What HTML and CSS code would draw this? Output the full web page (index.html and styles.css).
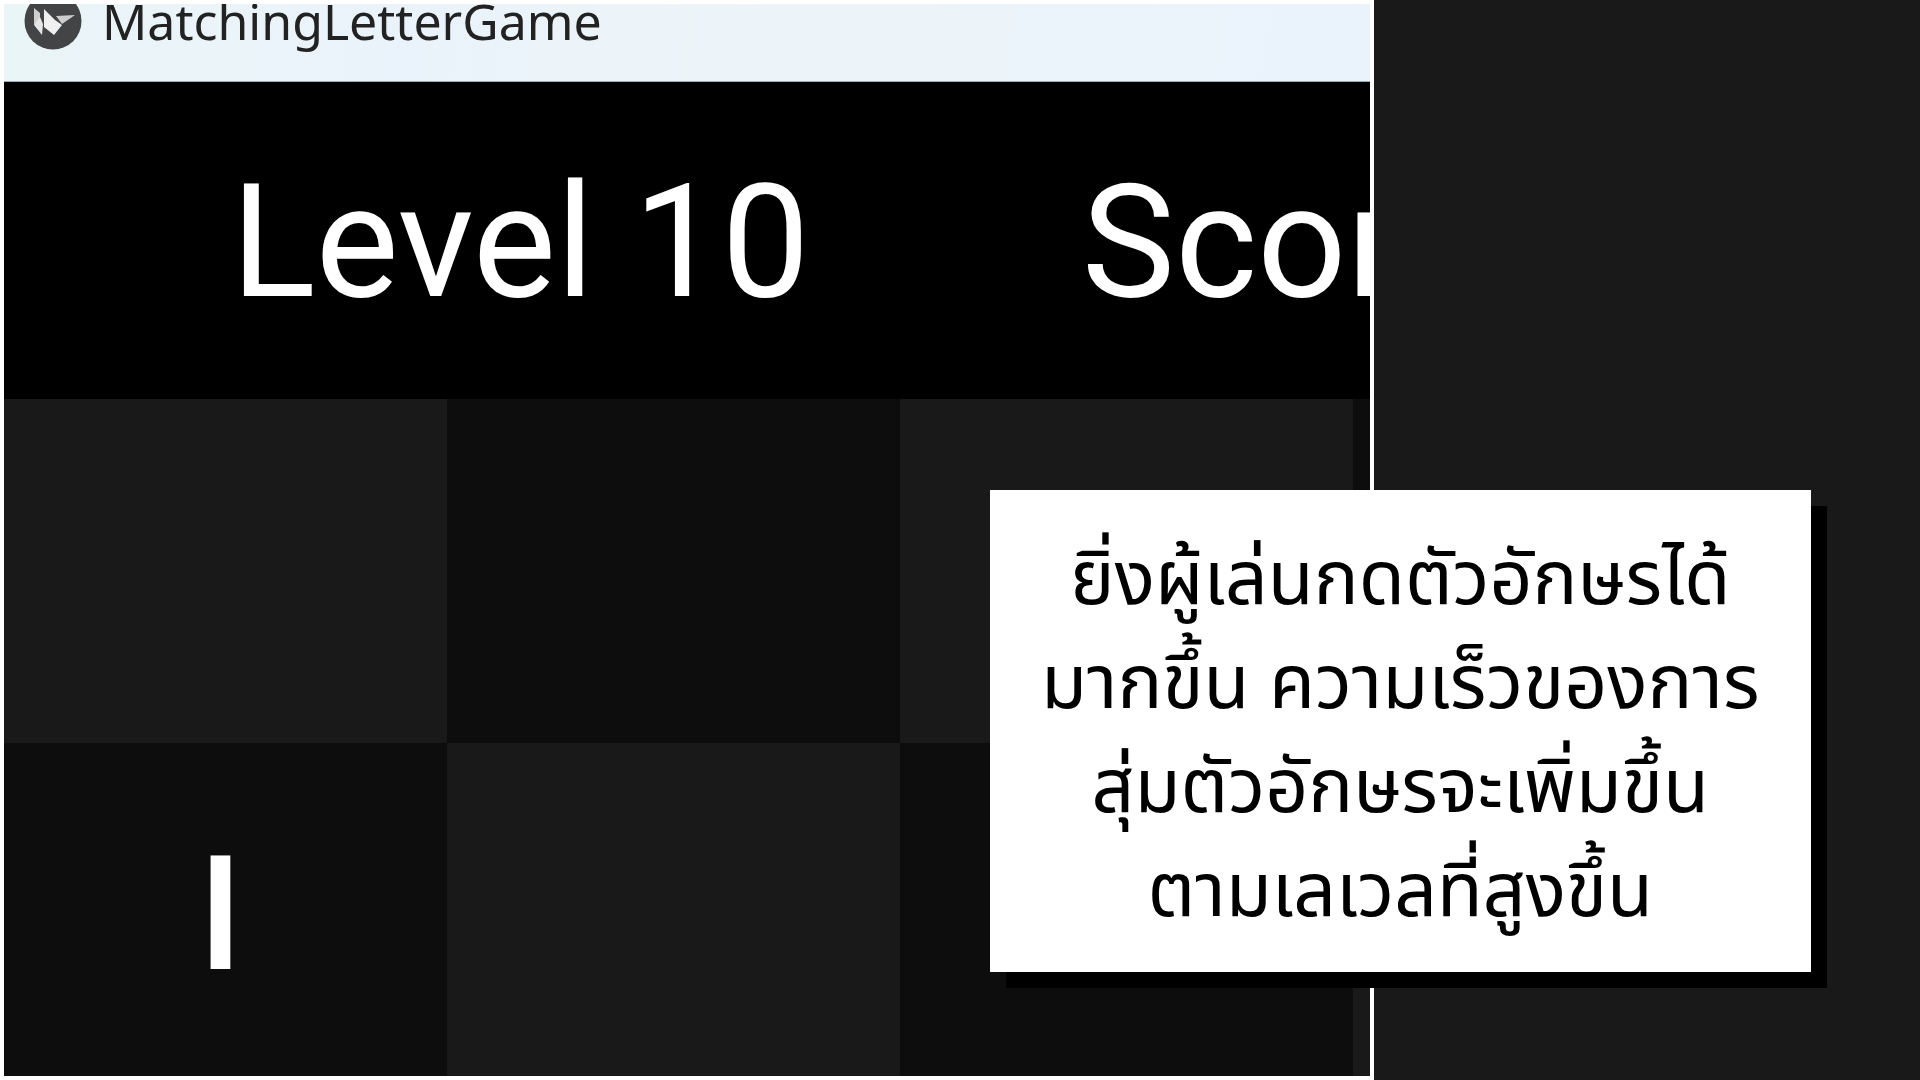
FILE: index.html
```html
<!DOCTYPE html>
<html lang="th">
<head>
<meta charset="utf-8">
<title>MatchingLetterGame</title>
<link rel="stylesheet" href="styles.css">
</head>
<body>
<main class="slide">
  <section class="window">
    <header class="titlebar">
      <svg class="logo" viewBox="0 0 58 58" aria-hidden="true">
        <circle cx="29" cy="29" r="28.5" fill="#434446"/>
        <path d="M10 16l6 5v7l-6 5z" fill="#cfcfcf"/>
        <path d="M16 25l-6 8 8 10 1-11z" fill="#e6e6e6"/>
        <path d="M20 17l11 11 7 5-8 10-10-8z" fill="#f0f0f0"/>
        <path d="M32 24l19-1-13 9z" fill="#cdcdcd"/>
      </svg>
      <h1 class="title">MatchingLetterGame</h1>
    </header>
    <div class="status">
      <span class="level">Level 10</span>
      <span class="score">Score</span>
    </div>
    <div class="board">
      <div class="cell light"></div><div class="cell"></div><div class="cell light"></div><div class="cell"></div>
      <div class="cell">I</div><div class="cell light"></div><div class="cell"></div><div class="cell light"></div>
    </div>
  </section>
  <p class="caption">ยิ่งผู้เล่นกดตัวอักษรได้<br>มากขึ้น ความเร็วของการ<br>สุ่มตัวอักษรจะเพิ่มขึ้น<br>ตามเลเวลที่สูงขึ้น</p>
</main>
</body>
</html>
```
FILE: styles.css
```css
* { box-sizing: border-box; }
body { margin: 0; background: #191919; }
.slide { position: relative; height: 100vh; display: flex; overflow: hidden; }
.window { width: 71.55%; display: flex; flex-direction: column; overflow: hidden; border: 4px solid #fff; background: #000; }
.titlebar { flex: none; height: 78px; display: flex; align-items: center; gap: 20px; padding: 0 20px 43px; background: linear-gradient(100deg, #eaf5f7, #eaf3fb 30%, #ecf4f8 50%, #eaf3fc); border-bottom: 1px solid #9db0ae; }
.logo { width: 58px; height: 58px; flex: none; }
.title { margin: 0; font: 400 50px/60px "Noto Sans", sans-serif; color: #222; }
.status { flex: none; height: 317px; display: flex; align-items: center; gap: 272px; padding: 3px 0 0 227px; font: 400 157px/200px Roboto, sans-serif; color: #fff; white-space: nowrap; }
.board { flex: none; display: grid; grid-template-columns: repeat(4, 453px); grid-auto-rows: 344px; margin-left: -10px; }
.cell { background: #0d0d0d; color: #fff; font: 500 160px/200px Roboto, sans-serif; display: flex; align-items: center; justify-content: center; }
.light { background: #191919; }
.caption { position: absolute; left: 51.55%; top: 490px; width: 821px; margin: 0; padding: 39px 40px 27px; background: #fff; box-shadow: 16px 16px 0 #000; color: #000; text-align: center; font: 400 75px/104px "Noto Sans Thai", "Noto Sans", sans-serif; white-space: nowrap; }
```
